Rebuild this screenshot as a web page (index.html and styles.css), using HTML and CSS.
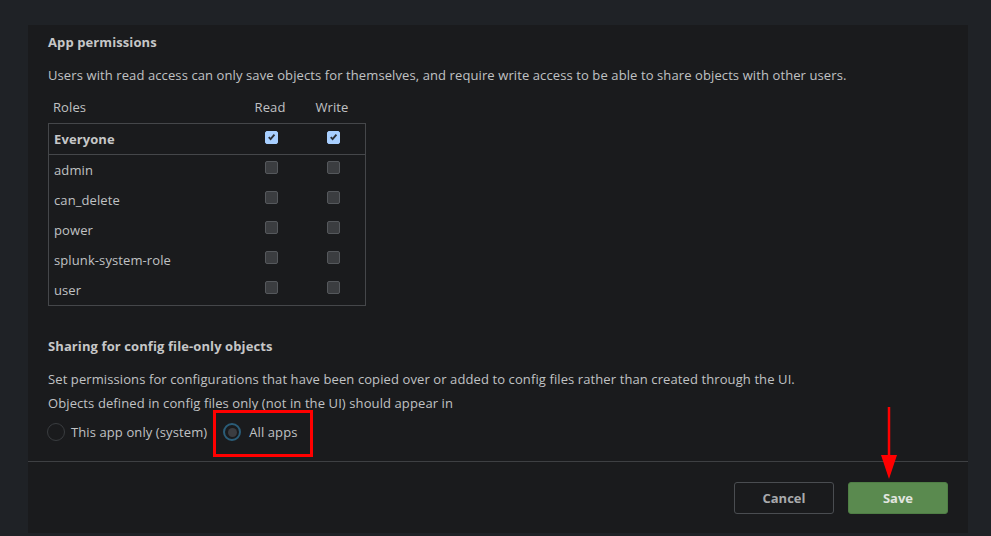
FILE: index.html
```html
<!DOCTYPE html>
<html>
<head>
<meta charset="utf-8">
<link rel="stylesheet" href="styles.css">
</head>
<body>
<div class="page">
  <div class="modal">
    <div class="body">
      <h3 class="title">App permissions</h3>
      <p class="text first">Users with read access can only save objects for themselves, and require write access to be able to share objects with other users.</p>
      <div class="perm">
        <div class="thead">
          <span class="c-role">Roles</span>
          <span class="c-chk">Read</span>
          <span class="c-chk">Write</span>
        </div>
        <div class="tbox">
          <div class="row everyone">
            <span class="c-role">Everyone</span>
            <span class="c-chk"><span class="cb on"><svg viewBox="0 0 12 12" width="12" height="12"><path d="M3 6.2 L5 8.3 L9.2 3.4" fill="none" stroke="#2b2f36" stroke-width="2"/></svg></span></span>
            <span class="c-chk"><span class="cb on"><svg viewBox="0 0 12 12" width="12" height="12"><path d="M3 6.2 L5 8.3 L9.2 3.4" fill="none" stroke="#2b2f36" stroke-width="2"/></svg></span></span>
          </div>
          <div class="rows">
            <div class="row"><span class="c-role">admin</span><span class="c-chk"><span class="cb"></span></span><span class="c-chk"><span class="cb"></span></span></div>
            <div class="row"><span class="c-role">can_delete</span><span class="c-chk"><span class="cb"></span></span><span class="c-chk"><span class="cb"></span></span></div>
            <div class="row"><span class="c-role">power</span><span class="c-chk"><span class="cb"></span></span><span class="c-chk"><span class="cb"></span></span></div>
            <div class="row"><span class="c-role">splunk-system-role</span><span class="c-chk"><span class="cb"></span></span><span class="c-chk"><span class="cb"></span></span></div>
            <div class="row"><span class="c-role">user</span><span class="c-chk"><span class="cb"></span></span><span class="c-chk"><span class="cb"></span></span></div>
          </div>
        </div>
      </div>
      <h3 class="title second">Sharing for config file-only objects</h3>
      <p class="text first2">Set permissions for configurations that have been copied over or added to config files rather than created through the UI.</p>
      <p class="text">Objects defined in config files only (not in the UI) should appear in</p>
      <div class="radios">
        <label class="radio"><span class="dot"></span>This app only (system)</label>
        <label class="radio sel"><span class="dot"><span class="inner"></span></span>All apps<span class="highlight"></span></label>
      </div>
    </div>
    <div class="footer">
      <button class="btn cancel">Cancel</button>
      <button class="btn save">Save<svg class="arrow" viewBox="0 0 20 74" width="20" height="74"><line x1="10" y1="0" x2="10" y2="52" stroke="#ff0000" stroke-width="2.5"/><polygon points="2,48 18,48 10,72" fill="#ff0000"/></svg></button>
    </div>
  </div>
</div>
</body>
</html>
```
FILE: styles.css
```css
* { box-sizing: border-box; }
html, body { margin: 0; padding: 0; }
body {
  background: #1f2226;
  font-family: "Open Sans", "Lato", sans-serif;
  color: #c0c2c4;
  font-size: 13px;
  letter-spacing: 0.1px;
  width: 991px;
  height: 536px;
  overflow: hidden;
}
.page { padding: 25px 23px 0 28px; }
.modal {
  width: 940px;
  height: 508px;
  background: #1a1b1d;
  display: flex;
  flex-direction: column;
}
.body { padding: 9px 20px 0 20px; height: 436px; }
.title {
  margin: 0;
  font-size: 13px;
  font-weight: 700;
  color: #c6c7c8;
  line-height: 16px;
}
.text { margin: 0; line-height: 24px; }
.text.first { margin-top: 13px; }
.perm { margin-top: 12px; width: 318px; }
.thead { display: flex; height: 24px; line-height: 16px; padding: 0 0 0 5px; }
.c-role { flex: 0 0 186px; }
.c-chk { flex: 0 0 62px; text-align: center; display: flex; justify-content: center; }
.tbox { border: 1px solid #45474a; }
.row { display: flex; align-items: center; height: 30px; padding-left: 5px; }
.everyone { font-weight: 700; border-bottom: 1px solid #45474a; height: 31px; color: #c6c7c8; }
.everyone .cb { margin-top: -4px; }
.rows .row .cb { margin-top: -5px; }
.rows .row { height: 30px; }
.cb {
  width: 13px; height: 13px;
  border-radius: 2px;
  background: #3b3d40;
  border: 1px solid #55585c;
  display: inline-flex; align-items: center; justify-content: center;
}
.cb.on { background: #a8cfff; border-color: #a8cfff; }
.title.second { margin-top: 32px; }
.text.first2 { margin-top: 13px; }
.radios { display: flex; align-items: center; margin-top: 5px; gap: 16px; height: 24px; }
.radio { display: flex; align-items: center; position: relative; }
.dot {
  width: 18px; height: 18px; border-radius: 50%;
  border: 1.5px solid #3a3d40;
  background: #1a1b1d;
  margin: 0 6px 0 -1px;
  display: inline-flex; align-items: center; justify-content: center;
}
.sel .dot { border: 2px solid #2b5d78; margin-left: 0; margin-right: 8px; }
.inner { width: 9px; height: 9px; border-radius: 50%; background: #3b3d41; }
.highlight {
  position: absolute;
  left: -10px; top: -13px;
  width: 100px; height: 47px;
  border: 3px solid #ff0000;
}
.footer {
  border-top: 1px solid #3e4043;
  flex: 1;
  display: flex;
  justify-content: flex-end;
  align-items: flex-start;
  padding: 20px 20px 0 0;
  gap: 14px;
}
.btn {
  width: 100px; height: 32px;
  font-family: inherit;
  font-size: 13px;
  font-weight: 700;
  border-radius: 3px;
  cursor: pointer;
}
.cancel { background: #1a1b1d; border: 1px solid #4a4d51; color: #a8aaac; }
.save { background: #5a8a4f; border: 1px solid #4f7e45; color: #e2e6e0; position: relative; }
.arrow { position: absolute; left: 30px; top: -76px; }
```
